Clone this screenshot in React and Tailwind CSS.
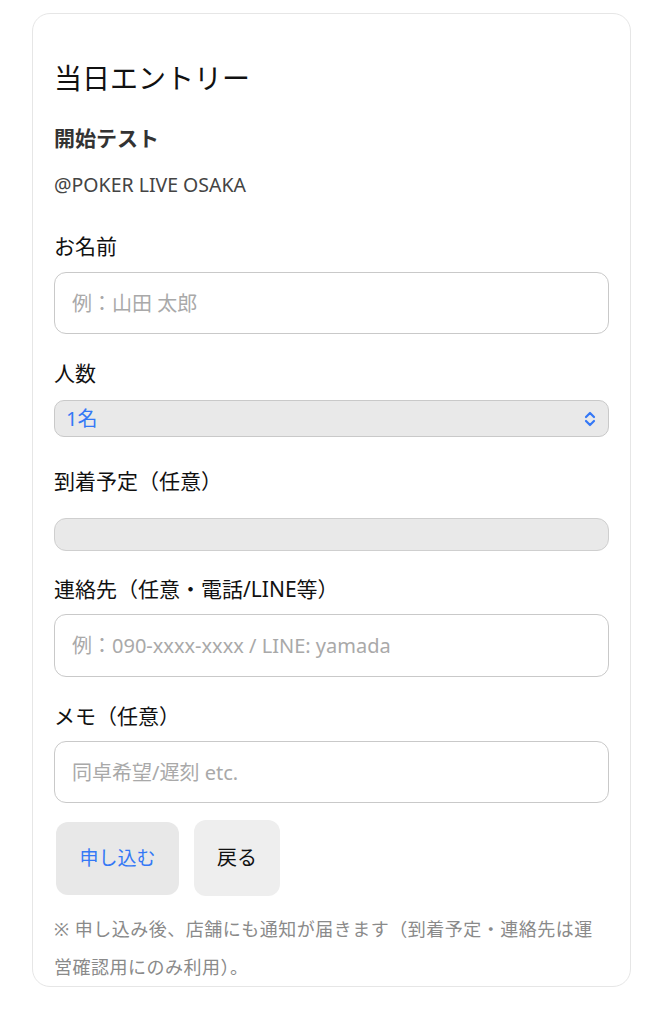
import React from 'react';

const FONT = { fontFamily: '"Noto Sans", "Noto Sans CJK JP", sans-serif' };

function Label({ children, className = '' }) {
  return <p className={`text-[21px] leading-[30px] text-[#111] ${className}`}>{children}</p>;
}

function TextInput({ placeholder, className = '' }) {
  return (
    <input
      type="text"
      placeholder={placeholder}
      className={`w-full h-[62px] rounded-[12px] border border-[#c9c9c9] bg-white px-[17px] text-[20px] text-[#111] placeholder:text-[#a9a9a9] outline-none ${className}`}
    />
  );
}

export default function App() {
  return (
    <div className="min-h-screen bg-white pt-[13px]" style={FONT}>
      <div className="ml-[32px] w-[599px] rounded-[18px] border border-[#e6e6e6] bg-white px-[21px] pt-[46px]">
        {/* Header */}
        <h1 className="text-[28px] leading-[36px] text-[#111]">当日エントリー</h1>
        <p className="mt-[27px] text-[21px] leading-[30px] font-semibold text-[#333]">開始テスト</p>
        <p className="mt-[18px] text-[19.5px] leading-[28px] text-[#444]">@POKER LIVE OSAKA</p>

        {/* Name */}
        <Label className="mt-[32px]">お名前</Label>
        <TextInput className="mt-[11px]" placeholder="例：山田 太郎" />

        {/* Count */}
        <Label className="mt-[24px]">人数</Label>
        <div className="mt-[12px] flex h-[37px] items-center justify-between rounded-[10px] border border-[#c9c9c9] bg-[#e9e9e9] pl-[11px] pr-[12px]">
          <span className="text-[20px] text-[#3478f6]">1名</span>
          <svg width="12" height="18" viewBox="0 0 12 18" fill="none" stroke="#3478f6" strokeWidth="2.2" strokeLinecap="round" strokeLinejoin="round">
            <path d="M2 7l4-4 4 4" />
            <path d="M2 11l4 4 4-4" />
          </svg>
        </div>

        {/* Arrival */}
        <Label className="mt-[29px]">到着予定（任意）</Label>
        <div className="mt-[22px] h-[33px] rounded-[12px] border border-[#cfcfcf] bg-[#e9e9e9]" />

        {/* Contact */}
        <Label className="mt-[23px]">連絡先（任意・電話/LINE等）</Label>
        <TextInput className="mt-[10px] h-[63px]" placeholder="例：090-xxxx-xxxx / LINE: yamada" />

        {/* Memo */}
        <Label className="mt-[24px]">メモ（任意）</Label>
        <TextInput className="mt-[10px]" placeholder="同卓希望/遅刻 etc." />

        {/* Buttons */}
        <div className="mt-[17px] flex items-center gap-[15px] pl-[2px]">
          <button className="h-[73px] w-[123px] rounded-[12px] bg-[#e8e8e8] text-[19px] text-[#3478f6]">申し込む</button>
          <button className="h-[76px] w-[86px] rounded-[12px] bg-[#eeeeee] text-[20px] text-[#111]">戻る</button>
        </div>

        {/* Note */}
        <p className="mt-[14px] text-[18px] leading-[38px] tracking-[0.5px] text-[#8a8a8a]">
          ※ 申し込み後、店舗にも通知が届きます（到着予定・連絡先は運営確認用にのみ利用）。
        </p>
      </div>
    </div>
  );
}
